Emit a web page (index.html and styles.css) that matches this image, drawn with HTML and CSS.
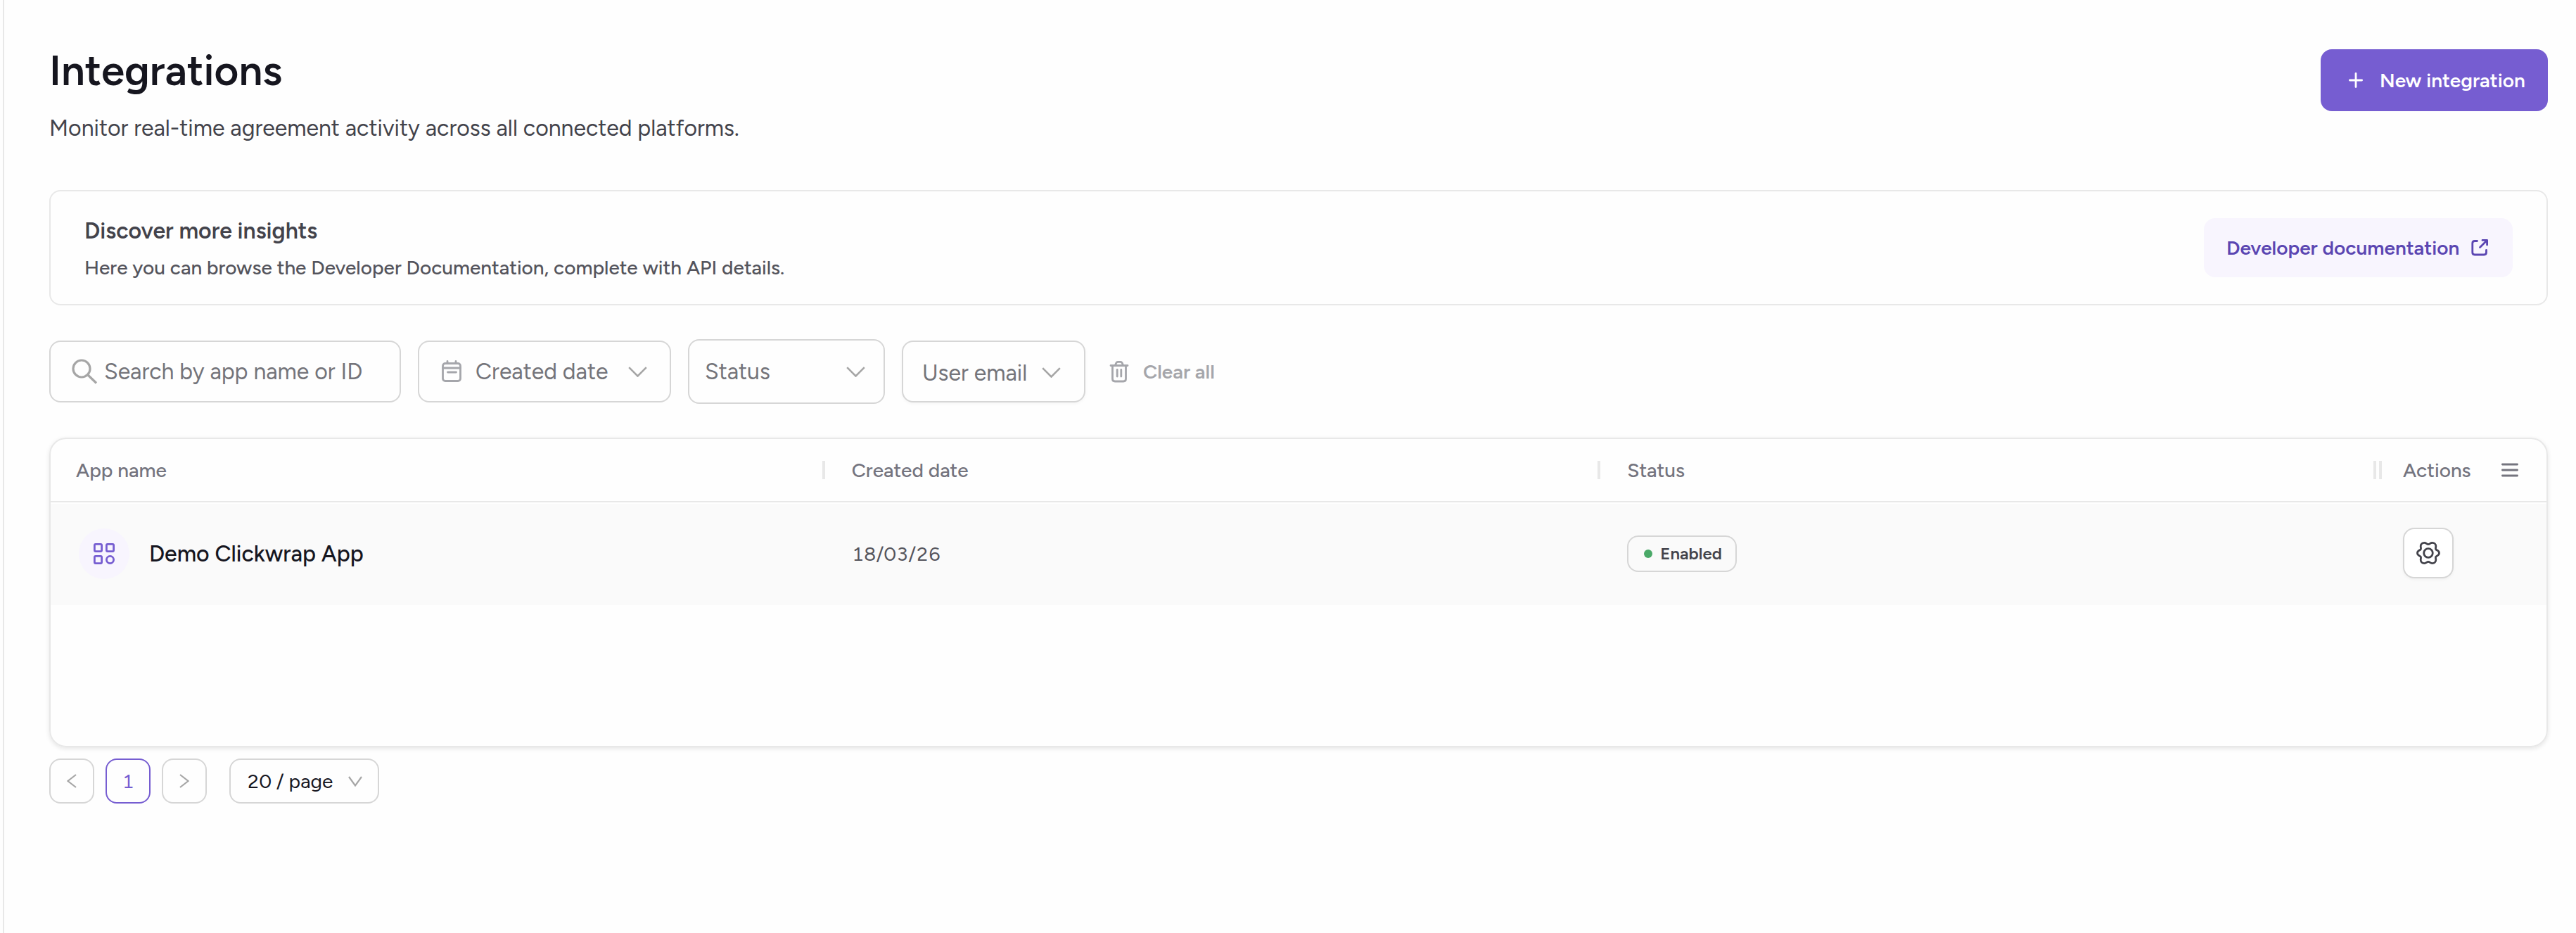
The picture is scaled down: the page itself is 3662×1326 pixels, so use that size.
FILE: index.html
```html
<!DOCTYPE html>
<html lang="en">
<head>
    <meta charset="UTF-8">
    <meta name="viewport" content="width=device-width, initial-scale=1.0">
    <title>Integrations</title>
    <link rel="stylesheet" href="styles.css">
</head>
<body>
    <main class="page">
        <header class="page-header">
            <div>
                <h1>Integrations</h1>
                <p class="subtitle">Monitor real-time agreement activity across all connected platforms.</p>
            </div>
            <button class="btn-primary">
                <svg width="20" height="22" viewBox="0 0 20 22" fill="none" stroke="currentColor" stroke-width="2.8" stroke-linecap="round"><path d="M10 1.4v19.2M1.4 11h17.2"/></svg>
                <span>New integration</span>
            </button>
        </header>

        <section class="insights">
            <div>
                <h2>Discover more insights</h2>
                <p>Here you can browse the Developer Documentation, complete with API details.</p>
            </div>
            <a class="btn-docs" href="#">
                <span>Developer documentation</span>
                <svg width="26" height="26" viewBox="0 0 26 26" fill="none" stroke="currentColor" stroke-width="2.8" stroke-linecap="round" stroke-linejoin="round"><path d="M9.5 3.5H6Q2.8 3.500 2.800 6.700v13.100q0 3.200 3.200 3.200h13.300q3.200 0 3.200-3.200V16.500M13.500 12.500 23 3M17 2.400h6.600V9"/></svg>
            </a>
        </section>

        <div class="filters">
            <div class="field search">
                <svg width="38" height="38" viewBox="0 0 38 38" fill="none" stroke="#a6a6a6" stroke-width="3.2"><circle cx="15" cy="15" r="12"/><path d="M23.500 23.500 36 35.500"/></svg>
                <span>Search by app name or ID</span>
            </div>
            <div class="field created">
                <svg width="28" height="32" viewBox="0 0 28 32" fill="none" stroke="#a5a6ab" stroke-width="2.8" stroke-linecap="round"><rect x="1.500" y="4.500" width="25" height="25" rx="3.500"/><path d="M1.500 11h25M8 1.500v3M20 1.500v3M8.500 17h12"/></svg>
                <span>Created date</span>
                <svg class="chevron" width="27" height="15" viewBox="0 0 27 15"><path d="M1.200 1.200 13.500 13.500 25.800 1.200"/></svg>
            </div>
            <div class="field status">
                <span>Status</span>
                <svg class="chevron" width="27" height="15" viewBox="0 0 27 15"><path d="M1.200 1.200 13.500 13.500 25.800 1.200"/></svg>
            </div>
            <div class="field email">
                <span>User email</span>
                <svg class="chevron" width="27" height="15" viewBox="0 0 27 15"><path d="M1.200 1.200 13.500 13.500 25.800 1.200"/></svg>
            </div>
            <button class="clear">
                <svg width="28" height="32" viewBox="0 0 28 32" fill="none" stroke="currentColor" stroke-width="2.8" stroke-linecap="round" stroke-linejoin="round"><path d="M2 7.500h24M4.500 7.500V26.500q0 3.500 3.500 3.500h12q3.500 0 3.500-3.500V7.500M8.500 7 9.800 3.800Q10.500 2.400 12 2.400h4q1.500 0 2.200 1.400L19.500 7M11.200 13.500v9.500M16.800 13.500v9.500"/></svg>
                <span>Clear all</span>
            </button>
        </div>

        <div class="table">
            <div class="row head">
                <div class="cell">App name</div>
                <div class="cell">Created date</div>
                <div class="cell">Status</div>
                <div class="cell actions">
                    <span>Actions</span>
                    <svg width="24" height="20" viewBox="0 0 24 20" stroke="#74747e" stroke-width="2.8" stroke-linecap="round"><path d="M1.400 2h21.200M1.400 10h21.200M1.400 18h21.200"/></svg>
                </div>
            </div>
            <div class="row body">
                <div class="cell">
                    <div class="app-icon">
                        <svg width="30" height="30" viewBox="0 0 30 30" fill="none" stroke="#765dd1" stroke-width="2.8"><rect x="1.400" y="1.400" width="10.200" height="10.200" rx="1.500"/><rect x="18.400" y="1.400" width="10.200" height="10.200" rx="1.500"/><rect x="1.400" y="18.400" width="10.200" height="10.200" rx="1.500"/><circle cx="23.500" cy="23.500" r="5.100"/></svg>
                    </div>
                    <span class="app-name">Demo Clickwrap App</span>
                </div>
                <div class="cell date">18/03/26</div>
                <div class="cell">
                    <span class="badge"><i class="dot"></i>Enabled</span>
                </div>
                <div class="cell">
                    <button class="btn-settings">
                        <svg width="34" height="32" viewBox="0 0 34 32" fill="none" stroke="#43434b" stroke-width="2.8" stroke-linejoin="round"><path d="M17 3.600c2.200 0 2.800-2.200 5.600-2.200 3 0 5.200 2 5.200 4.800 0 2.200-.8 3 0 4.600.9 1.600 4.700 1.500 4.700 5.200s-3.800 3.600-4.700 5.200c-.8 1.600 0 2.400 0 4.600 0 2.800-2.200 4.800-5.200 4.800-2.800 0-3.400-2.200-5.600-2.200s-2.800 2.200-5.600 2.200c-3 0-5.200-2-5.200-4.800 0-2.200.8-3 0-4.600C5.300 19.600 1.500 19.700 1.500 16s3.800-3.600 4.700-5.200c.8-1.600 0-2.400 0-4.600 0-2.800 2.200-4.800 5.200-4.800 2.800 0 3.400 2.200 5.600 2.200z"/><circle cx="17" cy="16" r="6.300"/></svg>
                    </button>
                </div>
            </div>
        </div>

        <nav class="pagination">
            <button class="page-btn">
                <svg width="14" height="20" viewBox="0 0 14 20"><path d="M13 1 1.500 10 13 19"/></svg>
            </button>
            <button class="page-btn active">1</button>
            <button class="page-btn">
                <svg width="14" height="20" viewBox="0 0 14 20"><path d="M1 1 12.500 10 1 19"/></svg>
            </button>
            <div class="page-size">
                <span>20 / page</span>
                <svg width="20" height="15" viewBox="0 0 20 15"><path d="M1 1 10 13.500 19 1"/></svg>
            </div>
        </nav>
    </main>
</body>
</html>
```
FILE: styles.css
```css
* {
    box-sizing: border-box;
}

body {
    margin: 0;
    background-color: #fefefe;
    font-family: Figtree, Lato, sans-serif;
    color: #54545c;
}

h1, h2, p {
    margin: 0;
}

button {
    font: inherit;
    padding: 0;
    cursor: pointer;
}

svg {
    display: block;
    flex-shrink: 0;
}

.page {
    min-height: 1326px;
    margin-left: 4px;
    padding: 68px 40px 0 64px;
    border-left: 2px solid #e8e8e8;
}

.page-header {
    display: flex;
    justify-content: space-between;
    align-items: flex-start;
    height: 202px;
}

h1 {
    font-size: 60px;
    line-height: 64px;
    font-weight: 600;
    color: #16161f;
}

.subtitle {
    margin-top: 30px;
    font-size: 32px;
    line-height: 40px;
    color: #43434b;
}

.btn-primary {
    display: flex;
    align-items: center;
    gap: 24px;
    width: 323px;
    height: 88px;
    margin-top: 2px;
    padding-left: 40px;
    border: none;
    border-radius: 16px;
    background-color: #765dd1;
    color: #fff;
    font-size: 28px;
    font-weight: 600;
}

.insights {
    display: flex;
    justify-content: space-between;
    align-items: center;
    height: 164px;
    padding: 0 48px;
    border: 2px solid #e8e8e8;
    border-radius: 16px;
}

.insights h2 {
    padding-top: 2px;
    font-size: 32px;
    line-height: 40px;
    font-weight: 600;
    color: #43434b;
}

.insights p {
    margin-top: 14px;
    font-size: 28px;
    line-height: 36px;
    font-weight: 500;
}

.btn-docs {
    display: flex;
    align-items: center;
    gap: 16px;
    width: 439px;
    height: 84px;
    padding-left: 32px;
    border-radius: 16px;
    background-color: #f8f5fe;
    color: #5b46b2;
    font-size: 28px;
    font-weight: 600;
    text-decoration: none;
}

.filters {
    display: flex;
    align-items: center;
    gap: 24px;
    height: 92px;
    margin: 48px 0;
}

.field {
    display: flex;
    align-items: center;
    height: 88px;
    border: 2px solid #d6d6d6;
    border-radius: 16px;
    font-size: 32px;
    color: #74747a;
}

.search {
    width: 500px;
    padding-left: 29px;
    gap: 9px;
}

.created {
    width: 360px;
    padding: 0 32px;
    gap: 20px;
}

.created .chevron {
    margin-left: auto;
}

.status {
    width: 280px;
    height: 92px;
    padding: 0 26px 0 22px;
    justify-content: space-between;
}

.email {
    width: 261px;
    padding: 3px 33px 0 27px;
    justify-content: space-between;
    box-shadow: 0 2px 4px rgba(0, 0, 0, 0.04);
}

.chevron {
    fill: none;
    stroke: #a6a6a6;
    stroke-width: 2.6;
}

.clear {
    display: flex;
    align-items: center;
    gap: 20px;
    margin-left: 10px;
    border: none;
    background: none;
    color: #a5a6ab;
    font-size: 28px;
    font-weight: 600;
}

.table {
    height: 440px;
    border: 2px solid #e8e8e8;
    border-radius: 24px;
    box-shadow: 0 2px 6px rgba(0, 0, 0, 0.1);
    overflow: hidden;
}

.row {
    display: grid;
    grid-template-columns: 1fr 1fr 1fr 240px;
}

.cell {
    display: flex;
    align-items: center;
    padding-left: 36px;
}

.head {
    height: 90px;
    border-bottom: 2px solid #e8e8e8;
    font-size: 28px;
    font-weight: 500;
    color: #74747e;
}

/* column resize handles */
.head .cell::after {
    content: "";
    width: 4px;
    height: 26px;
    margin-left: auto;
    margin-right: 2px;
    background-color: #e8e8e8;
}

.head .actions {
    padding-left: 2px;
}

.head .actions::before {
    content: "";
    width: 4px;
    height: 26px;
    margin-right: 30px;
    background-color: #e8e8e8;
}

.head .actions::after {
    display: none;
}

.head .actions svg {
    margin-left: auto;
    margin-right: 40px;
}

.body {
    height: 144px;
    margin-top: 2px;
    padding-bottom: 3px;
    background-color: #fafafa;
}

.app-icon {
    display: flex;
    justify-content: center;
    align-items: center;
    width: 72px;
    height: 72px;
    margin-left: 4px;
    margin-right: 28px;
    border-radius: 50%;
    background-color: #f8f5fe;
}

.app-name {
    font-size: 32px;
    font-weight: 500;
    color: #16161f;
}

.date {
    font-size: 28px;
    font-variant-numeric: tabular-nums;
}

.badge {
    display: flex;
    align-items: center;
    width: 156px;
    height: 52px;
    padding-left: 22px;
    border: 2px solid #d6d6d6;
    border-radius: 16px;
    font-size: 24px;
    font-weight: 600;
    color: #43434b;
}

.dot {
    width: 12px;
    height: 12px;
    margin-right: 11px;
    border-radius: 50%;
    background-color: #4aa968;
}

.btn-settings {
    display: flex;
    justify-content: center;
    align-items: center;
    width: 72px;
    height: 72px;
    margin-top: -2px;
    border: 2px solid #d6d6d6;
    border-radius: 16px;
    background-color: #fff;
    box-shadow: 0 2px 4px rgba(0, 0, 0, 0.04);
}

.pagination {
    display: flex;
    gap: 16px;
    margin-top: 16px;
    font-size: 28px;
    font-variant-numeric: tabular-nums;
}

.pagination svg {
    fill: none;
    stroke: #a6a6a6;
    stroke-width: 2.2;
}

.page-btn {
    display: flex;
    justify-content: center;
    align-items: center;
    width: 64px;
    height: 64px;
    border: 2px solid #d6d6d6;
    border-radius: 16px;
    background: none;
    font-variant-numeric: tabular-nums;
}

.page-btn.active {
    border-color: #765dd1;
    color: #765dd1;
}

.page-size {
    display: flex;
    justify-content: space-between;
    align-items: center;
    width: 213px;
    height: 64px;
    margin-left: 16px;
    padding: 0 22px 0 23px;
    border: 2px solid #d6d6d6;
    border-radius: 16px;
    color: #16161f;
}
```
